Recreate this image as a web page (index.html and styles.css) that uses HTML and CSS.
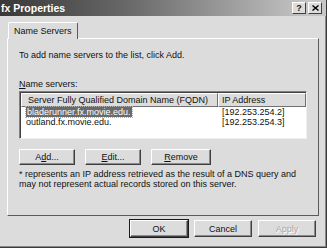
FILE: index.html
```html
<!DOCTYPE html>
<html>
<head>
  <title>fx Properties</title>
  <link rel="stylesheet" href="styles.css">
</head>
<body>
  <div class="dialog">
    <div class="titlebar">
      <span class="title">fx Properties</span>
      <div class="caption-btns">
        <span class="cap-btn">?</span>
        <span class="cap-btn">
          <svg width="7" height="6" viewBox="0 0 7 6"><path d="M0.5 0.5 L6.5 5.5 M6.5 0.5 L0.5 5.5" stroke="#000" stroke-width="1.4"/></svg>
        </span>
      </div>
    </div>

    <div class="tabs">
      <div class="tab">Name Servers</div>
    </div>

    <div class="panel">
      <p class="intro">To add name servers to the list, click Add.</p>
      <p class="label"><u>N</u>ame servers:</p>

      <div class="listbox">
        <div class="list-head">
          <div class="col col-name">Server Fully Qualified Domain Name (FQDN)</div>
          <div class="col col-ip">IP Address</div>
        </div>
        <div class="row">
          <div class="col col-name"><span class="selected">bladerunner.fx.movie.edu.</span></div>
          <div class="col col-ip">[192.253.254.2]</div>
        </div>
        <div class="row">
          <div class="col col-name">outland.fx.movie.edu.</div>
          <div class="col col-ip">[192.253.254.3]</div>
        </div>
      </div>

      <div class="list-btns">
        <button class="btn">A<u>d</u>d...</button>
        <button class="btn"><u>E</u>dit...</button>
        <button class="btn btn-wide"><u>R</u>emove</button>
      </div>

      <p class="note">* represents an IP address retrieved as the result of a DNS query and may not represent actual records stored on this server.</p>
    </div>

    <div class="footer">
      <button class="btn btn-default">OK</button>
      <button class="btn">Cancel</button>
      <button class="btn" disabled>Apply</button>
    </div>
  </div>
</body>
</html>
```

FILE: styles.css
```css
* {
  box-sizing: border-box;
}
body {
  margin: 0;
  background-color: #fff;
  font-family: 'Liberation Sans', Arial, sans-serif;
  font-size: 9px;
  color: #111;
}
p {
  margin: 0;
}
.dialog {
  width: 327px;
  height: 248px;
  background-color: #dcdcdc;
  border-right: 1px solid #3a3a3a;
  border-bottom: 1px solid #3a3a3a;
  box-shadow: inset -1px -1px 0 #8a8a8a;
  display: flex;
  flex-direction: column;
}
.titlebar {
  height: 16px;
  background: linear-gradient(to right, #383838, #6a6a6a 40%, #c6c6c6 95%);
  display: flex;
  align-items: center;
  justify-content: space-between;
  padding: 0 4px 0 1px;
}
.title {
  color: #fff;
  font-weight: bold;
  font-size: 10.5px;
}
.caption-btns {
  display: flex;
  gap: 2px;
}
.cap-btn {
  width: 14px;
  height: 12px;
  background-color: #dcdcdc;
  border: 1px solid;
  border-color: #fff #404040 #404040 #fff;
  font-weight: bold;
  font-size: 9px;
  line-height: 9px;
  display: flex;
  align-items: center;
  justify-content: center;
}
.tabs {
  display: flex;
  padding: 6px 0 0 8px;
  height: 22px;
}
.tab {
  border: 1px solid;
  border-color: #fff #5a5a5a transparent #fff;
  border-bottom: none;
  padding: 3px 5px 0 5px;
  height: 17px;
  margin-bottom: -1px;
  background-color: #dcdcdc;
  position: relative;
  z-index: 1;
  border-radius: 2px 2px 0 0;
}
.panel {
  margin: 0 7px;
  width: 312px;
  height: 178px;
  border: 1px solid;
  border-color: #fff #5a5a5a #5a5a5a #fff;
  padding: 11px 11px 0 11px;
}
.intro {
  margin-bottom: 19px;
}
.label {
  margin-bottom: 2px;
}
.listbox {
  height: 48px;
  background-color: #fff;
  border: 1px solid;
  border-color: #808080 #f0f0f0 #f0f0f0 #808080;
  box-shadow: inset 1px 1px 0 #404040;
}
.list-head {
  display: flex;
  height: 14px;
  margin: 1px 0 0 1px;
}
.list-head .col {
  background-color: #dcdcdc;
  border: 1px solid;
  border-color: #fff #707070 #707070 #fff;
  padding: 1px 0 0 6px;
}
.col-name {
  width: 197px;
}
.list-head .col-ip {
  flex: 1;
  padding-left: 3px;
}
.row {
  display: flex;
  height: 9px;
  line-height: 9px;
  margin: 1px 0 0 1px;
}
.row .col-name {
  padding-left: 5px;
}
.row .col-ip {
  padding-left: 4px;
}
.selected {
  background-color: #6a6a6a;
  color: #fff;
  outline: 1px dotted #b0b0b0;
  padding: 0 1px;
}
.list-btns {
  display: flex;
  gap: 10px;
  margin-top: 10px;
}
.btn {
  width: 56px;
  height: 16px;
  padding: 0;
  font-family: inherit;
  font-size: 9px;
  color: #111;
  background-color: #dcdcdc;
  border: 1px solid;
  border-color: #fff #404040 #404040 #fff;
  box-shadow: inset -1px -1px 0 #8a8a8a;
}
.btn-wide {
  width: 60px;
}
.btn-default {
  outline: 1px solid #1a1a1a;
}
.btn:disabled {
  color: #a8a8a8;
  text-shadow: 1px 1px 0 #fff;
}
.note {
  margin-top: 4px;
  line-height: 10px;
}
.footer {
  display: flex;
  justify-content: flex-end;
  gap: 6px;
  padding: 4px 10px 0 0;
}
.footer .btn {
  width: 58px;
  height: 17px;
}
```
